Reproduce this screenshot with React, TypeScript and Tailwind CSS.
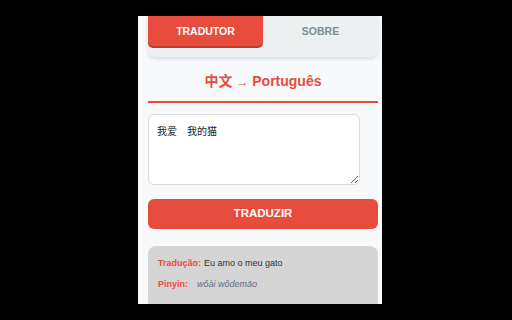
import { useState } from 'react';

export default function App() {
    const [tab, setTab] = useState<'tradutor' | 'sobre'>('tradutor');
    const [text, setText] = useState('我爱　我的猫');

    return (
        <div className="w-[512px] h-[320px] bg-black flex pl-[138px] pt-[16px] font-['Liberation_Sans','Noto_Sans_CJK_SC',sans-serif]">
            <div className="w-[244px] h-[288px] bg-[#f8f9fa] overflow-hidden pl-[10px] pr-[4px]">
                {/* Tabs */}
                <div className="flex bg-[#ecf0f1] rounded-b-lg shadow-[0_2px_4px_rgba(0,0,0,0.12)] pb-[11px]">
                    <button
                        onClick={() => setTab('tradutor')}
                        className={`flex-1 h-[30px] pt-[1px] text-[10.5px] font-bold rounded-b-[5px] ${tab === 'tradutor' ? 'bg-[#e74c3c] text-white shadow-[0_2px_0_#c0392b]' : 'text-[#7f8c8d]'}`}
                    >
                        TRADUTOR
                    </button>
                    <button
                        onClick={() => setTab('sobre')}
                        className={`flex-1 h-[30px] pt-[1px] text-[10.5px] font-bold rounded-b-[5px] ${tab === 'sobre' ? 'bg-[#e74c3c] text-white shadow-[0_2px_0_#c0392b]' : 'text-[#7f8c8d]'}`}
                    >
                        SOBRE
                    </button>
                </div>

                {/* Title */}
                <div className="mt-[16px] pb-[10px] border-b-2 border-[#e74c3c] text-center text-[14px] leading-[17px] font-bold text-[#e74c3c]">
                    中文 <span className="font-normal text-[12px]">→</span> Português
                </div>

                {/* Input */}
                <textarea
                    value={text}
                    onChange={(e) => setText(e.target.value)}
                    className="block mt-[11px] w-[212px] h-[71px] rounded-[6px] border-[1.5px] border-[#dcdcdc] bg-white px-[8px] pt-[10px] pb-[6px] text-[10px] leading-[14px] text-[#222] outline-none"
                />

                {/* Translate */}
                <button className="mt-[14px] w-full h-[30px] rounded-[6px] bg-[#e74c3c] text-white text-[11.5px] font-bold">
                    TRADUZIR
                </button>

                {/* Result */}
                <div className="mt-[17px] bg-[#d5d5d5] rounded-lg px-[10px] pt-[12px] pb-[20px] text-[9px] leading-[11px]">
                    <div className="flex gap-[3px]">
                        <span className="font-bold text-[#e74c3c]">Tradução:</span>
                        <span className="text-[#333]">Eu amo o meu gato</span>
                    </div>
                    <div className="flex mt-[10px]">
                        <span className="font-bold text-[#e74c3c] w-[39px]">Pinyin:</span>
                        <span className="italic text-[#5d6d7e]">wǒài wǒdemāo</span>
                    </div>
                </div>
            </div>
        </div>
    );
}
